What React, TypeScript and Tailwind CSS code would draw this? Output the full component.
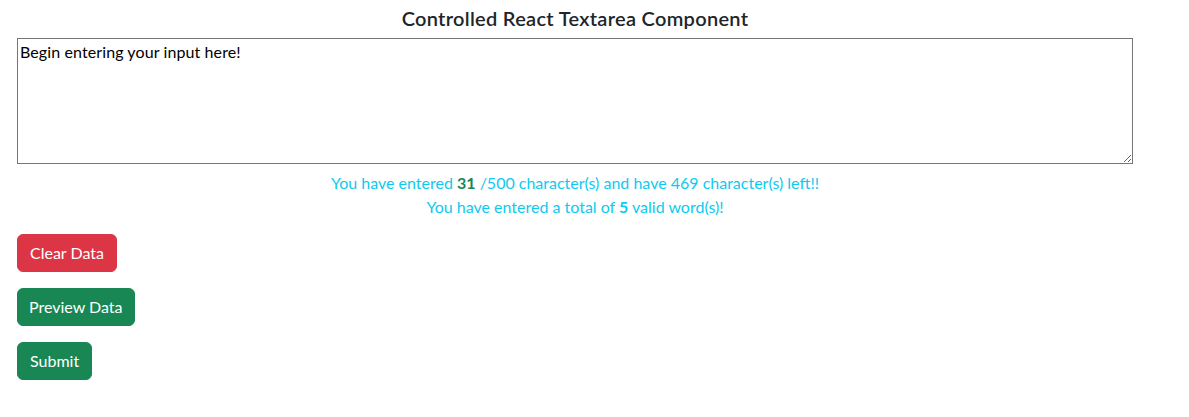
import React from "react";

export default function App() {
  const font = { fontFamily: '"Segoe UI", Lato, "Noto Sans", "Liberation Sans", sans-serif' };
  return (
    <div className="w-[1189px] min-h-[417px] bg-white text-[#212529]" style={font}>
      <div className="w-[1150px] pl-[17px] pr-[17px] pt-[6px]">
        <h5 className="text-center text-[20px] leading-[24px] font-semibold mb-[8px] tracking-[0.3px]">
          Controlled React Textarea Component
        </h5>
        <textarea
          className="block w-[1116px] h-[126px] border border-[#767676] px-[2px] py-[1px] text-[16px] leading-[24px] text-black outline-none tracking-[0.1px]"
          style={font}
          defaultValue="Begin entering your input here!"
        />
        <div className="mt-[7px] text-center text-[16px] leading-[24px] text-[#0dcaf0]">
          <p>
            You have entered <b className="text-[#198754] font-bold">31</b> /500 character(s) and have 469 character(s) left!!
          </p>
          <p>
            You have entered a total of <b className="font-bold">5</b> valid word(s)!
          </p>
        </div>
        <div className="mt-[15px] flex flex-col items-start gap-[16px]">
          <button className="h-[38px] px-[12px] rounded-[6px] bg-[#dc3545] text-white text-[16px] leading-[24px] border border-[#dc3545]">
            Clear Data
          </button>
          <button className="h-[38px] px-[11px] rounded-[6px] bg-[#198754] text-white text-[16px] leading-[24px] border border-[#198754]">
            Preview Data
          </button>
          <button className="h-[38px] px-[12px] rounded-[6px] bg-[#198754] text-white text-[16px] leading-[24px] border border-[#198754]">
            Submit
          </button>
        </div>
      </div>
    </div>
  );
}
